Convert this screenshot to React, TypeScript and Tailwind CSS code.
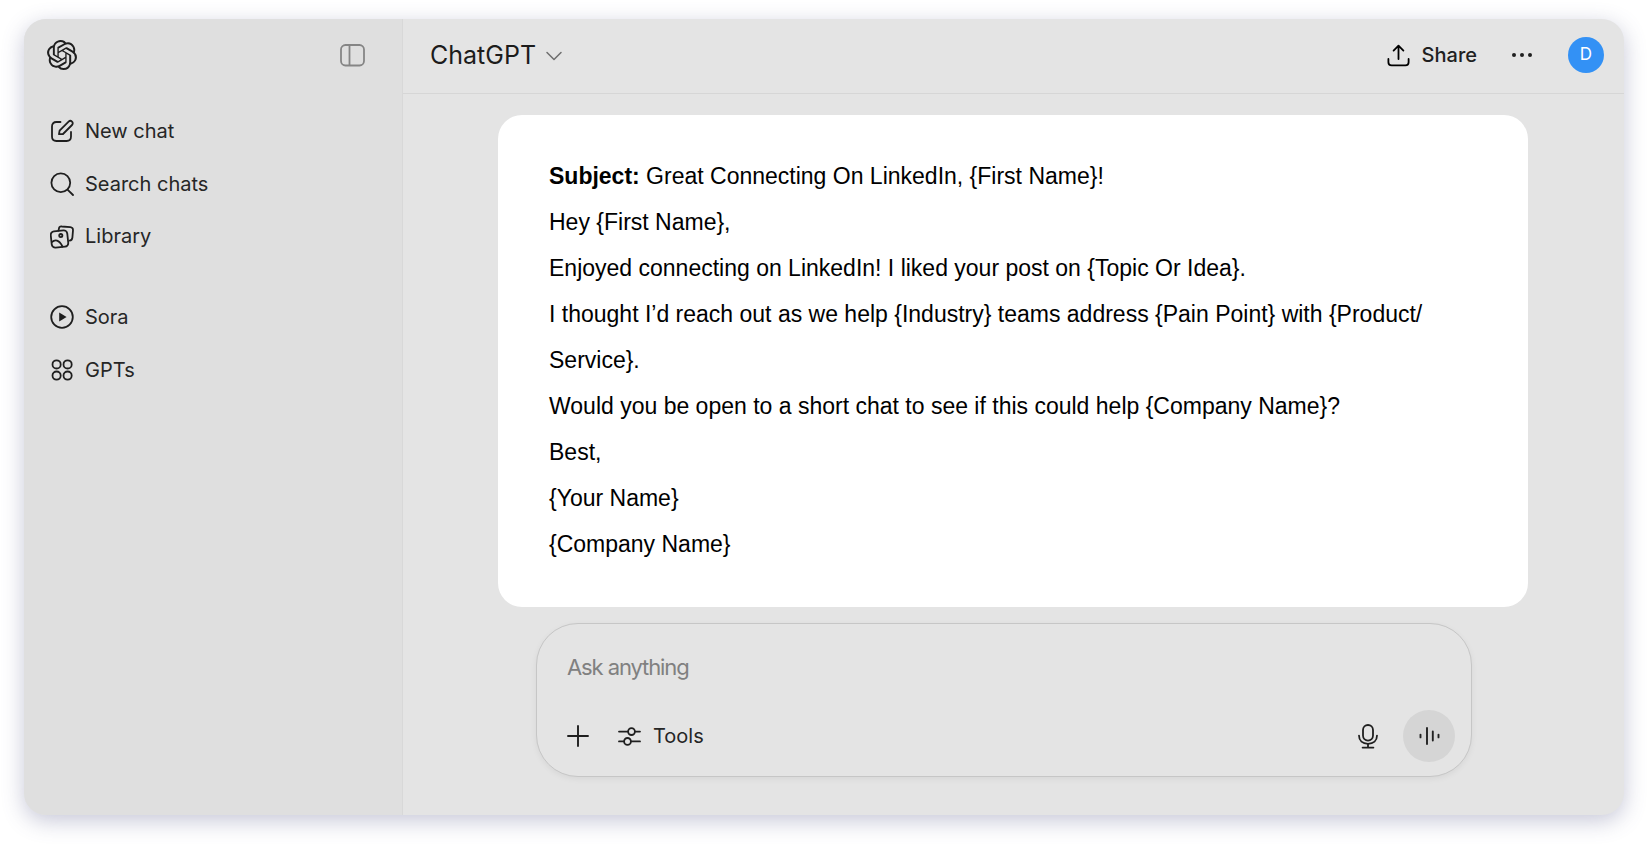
import React from "react";
import { SiOpenai } from "react-icons/si";
import { ChevronDown } from "lucide-react";

const stroke = {
  fill: "none",
  stroke: "currentColor",
  strokeWidth: 1.8,
  strokeLinecap: "round" as const,
  strokeLinejoin: "round" as const,
};

function NewChatIcon() {
  return (
    <svg width="24" height="24" viewBox="0 0 24 24" {...stroke}>
      <path d="M10.5 3 H6.4 C3.6 3 2 4.6 2 7.4 V17.6 C2 20.4 3.6 22 6.4 22 H16.6 C19.4 22 21 20.4 21 17.6 V13" />
      <path d="M9 15.2 L9.6 11.6 L18.6 2.6 C19.6 1.6 21 1.6 22 2.6 C23 3.6 23 5 22 6 L13 15 Z" />
    </svg>
  );
}

function SearchIcon() {
  return (
    <svg width="24" height="24" viewBox="0 0 24 24" {...stroke}>
      <circle cx="10.8" cy="10.8" r="9.4" />
      <path d="M17.8 17.8 L23 23" />
    </svg>
  );
}

function LibraryIcon() {
  return (
    <svg width="25" height="25" viewBox="0 0 25 25" {...stroke}>
      <path d="M8.5 6.6 L8.9 4.6 C9.2 3.1 10.3 2.3 11.8 2.5 L20.3 3.2 C22.1 3.4 23.2 4.6 23 6.4 L22.4 13.6 C22.2 15.4 21.2 16.4 19.6 16.6" />
      <rect x="1.2" y="6.8" width="16.6" height="16.4" rx="3.6" transform="rotate(-6 9.5 15)" />
      <circle cx="10.8" cy="11.6" r="1.6" />
      <path d="M1.8 18.2 C5 15.2 9 15.6 12.5 22.5" />
    </svg>
  );
}

function SoraIcon() {
  return (
    <svg width="24" height="24" viewBox="0 0 24 24" {...stroke}>
      <circle cx="12" cy="12" r="10.8" />
      <path d="M9.2 7.4 L16.6 12 L9.2 16.6 Z" fill="currentColor" stroke="none" />
    </svg>
  );
}

function GptsIcon() {
  return (
    <svg width="24" height="24" viewBox="0 0 24 24" {...stroke}>
      <circle cx="6.6" cy="6.4" r="4.1" />
      <circle cx="17.6" cy="6.4" r="4.1" />
      <circle cx="6.6" cy="17.6" r="4.1" />
      <circle cx="17.6" cy="17.6" r="4.1" />
    </svg>
  );
}

function PanelIcon() {
  return (
    <svg width="25" height="23" viewBox="0 0 25 23" fill="none" stroke="#858585" strokeWidth="1.8">
      <rect x="1" y="1" width="23" height="20.5" rx="4.5" />
      <path d="M9.5 1 V21.5" />
    </svg>
  );
}

function ShareIcon() {
  return (
    <svg width="23" height="23" viewBox="0 0 23 23" {...stroke}>
      <path d="M11.5 15 V2 M6.6 6.6 L11.5 1.6 L16.4 6.6" />
      <path d="M1.4 15 V18.2 C1.4 20.2 2.6 21.4 4.6 21.4 H18.4 C20.4 21.4 21.6 20.2 21.6 18.2 V15" />
    </svg>
  );
}

function PlusIcon() {
  return (
    <svg width="22" height="22" viewBox="0 0 22 22" fill="none" stroke="currentColor" strokeWidth="1.9" strokeLinecap="round">
      <path d="M11 1 V21 M1 11 H21" />
    </svg>
  );
}

function ToolsIcon() {
  return (
    <svg width="23" height="23" viewBox="0 0 23 23" {...stroke}>
      <path d="M1 6.6 H10 M17 6.6 H22 M1 16.4 H6 M13 16.4 H22" />
      <circle cx="13.5" cy="6.6" r="3.4" />
      <circle cx="9.5" cy="16.4" r="3.4" />
    </svg>
  );
}

function MicIcon() {
  return (
    <svg width="22" height="25" viewBox="0 0 22 25" {...stroke}>
      <rect x="6" y="1" width="10" height="15.6" rx="5" />
      <path d="M2 11.6 C2 16.8 5.6 19.8 11 19.8 C16.4 19.8 20 16.8 20 11.6" />
      <path d="M11 19.8 V23.6 M5.6 23.6 H16.4" />
    </svg>
  );
}

function WaveIcon() {
  return (
    <svg width="21" height="18" viewBox="0 0 21 18" fill="none" stroke="#222222" strokeWidth="1.9" strokeLinecap="round">
      <path d="M1.5 7.6 V10.4 M8 1 V17 M13.8 4.4 V13.6 M19.5 7.6 V10.4" />
    </svg>
  );
}

function NavItem({ icon, label }: { icon: React.ReactNode; label: string }) {
  return (
    <div className="flex h-[52.6px] items-center">
      <span className="flex w-[36px] -ml-[1px] shrink-0 items-center justify-center text-[#1f1f1f]">{icon}</span>
      <span className="ml-[5px] text-[20px] text-[#262626]">{label}</span>
    </div>
  );
}

const lines = [
  "Hey {First Name},",
  "Enjoyed connecting on LinkedIn! I liked your post on {Topic Or Idea}.",
  "I thought I\u2019d reach out as we help {Industry} teams address {Pain Point} with {Product/ Service}.",
  "Would you be open to a short chat to see if this could help {Company Name}?",
  "Best,",
  "{Your Name}",
  "{Company Name}",
];

export default function App() {
  return (
    <div className="h-[844px] w-[1648px] overflow-hidden bg-white pl-[24px] pr-[24px] pt-[19px] font-['Inter',sans-serif]">
      <div className="flex h-[796px] w-[1600px] overflow-hidden rounded-[22px] bg-[#e4e4e4] shadow-[0_6px_22px_rgba(80,85,135,0.32)]">
        <aside className="flex w-[379px] shrink-0 flex-col border-r border-[#d8d8d8] bg-[#dfdfdf] pl-[23px] pr-[37px]">
          <div className="flex h-[72px] items-center justify-between">
            <SiOpenai size={30} className="text-[#1f1f1f]" />
            <PanelIcon />
          </div>
          <div className="-ml-[2px] mt-[14px] flex flex-col">
            <NavItem icon={<NewChatIcon />} label="New chat" />
            <NavItem icon={<SearchIcon />} label="Search chats" />
            <NavItem icon={<LibraryIcon />} label="Library" />
          </div>
          <div className="-ml-[2px] mt-[28px] flex flex-col">
            <NavItem icon={<SoraIcon />} label="Sora" />
            <NavItem icon={<GptsIcon />} label="GPTs" />
          </div>
        </aside>
        <main className="flex min-w-0 flex-1 flex-col">
          <header className="flex h-[75px] shrink-0 items-center border-b border-[#d6d6d6] pb-[2px] pl-[27px] pr-[20px]">
            <span className="mt-[1px] text-[25px] text-[#1c1c1c]">ChatGPT</span>
            <ChevronDown size={28} strokeWidth={1.3} className="ml-[4px] mt-[2px] text-[#707070]" />
            <div className="ml-auto flex items-center">
              <ShareIcon />
              <span className="ml-[12px] text-[20px] font-medium text-[#1f1f1f]">Share</span>
              <div className="ml-[35px] flex gap-[4px]">
                <span className="size-[4px] rounded-full bg-[#1f1f1f]" />
                <span className="size-[4px] rounded-full bg-[#1f1f1f]" />
                <span className="size-[4px] rounded-full bg-[#1f1f1f]" />
              </div>
              <div className="ml-[36px] flex size-[36px] items-center justify-center rounded-full bg-[#3391f5] text-[17px] text-white">
                D
              </div>
            </div>
          </header>
          <div className="flex flex-1 flex-col items-center pr-[1px] pt-[21px]">
            <div className="w-[1030px]">
              <div className="rounded-[24px] bg-white pb-[40px] pl-[51px] pr-[48px] pt-[38px] font-['Liberation_Sans',Arial,sans-serif] text-[23px] leading-[46px] text-black">
                <p>
                  <strong className="font-bold">Subject:</strong> Great Connecting On LinkedIn, {"{First Name}"}!
                </p>
                {lines.map((line) => (
                  <p key={line}>{line}</p>
                ))}
              </div>
              <div className="ml-[38px] mt-[16px] flex h-[154px] w-[936px] flex-col rounded-[42px] border border-[#c6c6c6] bg-[#e4e4e4] pl-[30px] pr-[16px] shadow-[0_2px_6px_rgba(0,0,0,0.06)]">
                <div className="mt-[28px] text-[22px] leading-[30px] tracking-[-1.1px] text-[#808080]">Ask anything</div>
                <div className="mt-[28px] flex items-center">
                  <span className="text-[#1f1f1f]">
                    <PlusIcon />
                  </span>
                  <span className="ml-[29px] text-[#1f1f1f]">
                    <ToolsIcon />
                  </span>
                  <span className="ml-[12px] text-[20px] text-[#262626]">Tools</span>
                  <span className="ml-auto text-[#1f1f1f]">
                    <MicIcon />
                  </span>
                  <div className="ml-[24px] flex size-[52px] items-center justify-center rounded-full bg-[#d5d5d5]">
                    <WaveIcon />
                  </div>
                </div>
              </div>
            </div>
          </div>
        </main>
      </div>
    </div>
  );
}
